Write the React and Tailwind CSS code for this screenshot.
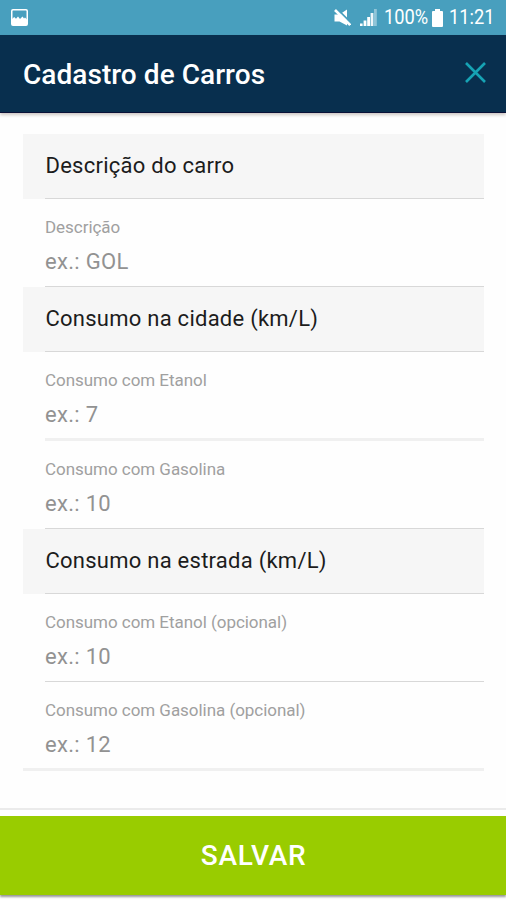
import React from 'react';

const sections = [
  {
    title: 'Descrição do carro',
    fields: [{ label: 'Descrição', hint: 'ex.: GOL', row: 'h-[88px]', line: 'h-[1.5px] bg-[#d8d8d8]' }],
  },
  {
    title: 'Consumo na cidade (km/L)',
    fields: [
      { label: 'Consumo com Etanol', hint: 'ex.: 7', row: 'h-[89px]', line: 'h-[3px] bg-[#f0f0f0]' },
      { label: 'Consumo com Gasolina', hint: 'ex.: 10', row: 'h-[88px]', line: 'h-[1.5px] bg-[#d8d8d8]' },
    ],
  },
  {
    title: 'Consumo na estrada (km/L)',
    fields: [
      { label: 'Consumo com Etanol (opcional)', hint: 'ex.: 10', row: 'h-[88px]', line: 'h-[1.5px] bg-[#d8d8d8]' },
      { label: 'Consumo com Gasolina (opcional)', hint: 'ex.: 12', row: 'h-[89px]', line: 'h-[3px] bg-[#f0f0f0]' },
    ],
  },
];

const StatusBar = () => (
  <div className="flex h-[35px] shrink-0 items-center bg-[#489fbe] pl-[11px] pr-[11px] text-white">
    <svg width="17" height="17" viewBox="0 0 17 17" fill="none">
      <rect x="0.75" y="0.75" width="15.5" height="15.5" rx="1.2" stroke="#fff" strokeWidth="1.5" />
      <path d="M1 16V10L3.2 8L5 9.8L7 7.5L9 10L11.5 7.5L13 9.5L14 8.5L16 10.5V16Z" fill="#fff" />
    </svg>
    <svg className="ml-auto" width="17" height="18" viewBox="0 0 17 18">
      <path d="M0.5 5.5H5.5L13 0.5V16.5L5.5 12.5H0.5Z" fill="#fff" />
      <path d="M3.2 0L17.5 14.4" stroke="#489fbe" strokeWidth="1.8" />
      <path d="M1 1L16.2 16" stroke="#fff" strokeWidth="2.6" />
    </svg>
    <svg className="ml-[9px]" width="17" height="17" viewBox="0 0 17 17" fill="#fff">
      <rect x="0" y="14.5" width="2.6" height="2.5" />
      <rect x="3.6" y="11.5" width="2.8" height="5.5" />
      <rect x="7.2" y="8" width="2.8" height="9" />
      <rect x="10.6" y="4" width="2.8" height="13" opacity="0.9" />
      <rect x="14" y="0" width="2.8" height="17" opacity="0.4" />
    </svg>
    <span className="ml-[7px] w-[46px] whitespace-nowrap text-[21px] leading-none">
      <span className="inline-block origin-left scale-x-[0.87]">100%</span>
    </span>
    <svg className="ml-[2px]" width="11" height="18" viewBox="0 0 11 18" fill="#fff">
      <path d="M3 0H8V2H10Q11 2 11 3V17Q11 18 10 18H1Q0 18 0 17V3Q0 2 1 2H3Z" />
    </svg>
    <span className="ml-[6px] w-[46px] whitespace-nowrap text-[21px] leading-none">
      <span className="inline-block origin-left scale-x-[0.87]">11:21</span>
    </span>
  </div>
);

const Field = ({ label, hint, row, line, full }) => (
  <div className={`flex flex-col ${row}`}>
    <div className="flex flex-1 flex-col pl-[22px] pt-[15.5px]">
      <span className="text-[17px] leading-6 tracking-[-0.04px] text-[#a0a0a0]">{label}</span>
      <span className="mt-[7.5px] text-[22px] leading-8 tracking-[0.3px] text-[#929292]">{hint}</span>
    </div>
    <div className={`shrink-0 ${full ? '' : 'ml-[22px]'} ${line}`} />
  </div>
);

const App = () => (
  <div className="flex h-[900px] w-[506px] flex-col overflow-hidden bg-[#fefefe] font-['Roboto',sans-serif]">
    <StatusBar />
    <header className="flex h-[78px] shrink-0 items-center justify-between border-b border-[#0a1138] bg-[#082f4e] pl-[23px] pr-[20px] shadow-[0_2px_3px_rgba(60,30,20,0.25)]">
      <h1 className="pt-[2px] text-[28px] font-medium leading-9 tracking-[0.05px] text-white">Cadastro de Carros</h1>
      <svg width="21" height="21" viewBox="0 0 21 21" stroke="#16a3b4" strokeWidth="2.6" className="mb-[3px]">
        <path d="M1 1L20 20M20 1L1 20" />
      </svg>
    </header>
    <main className="flex-1 pl-[23px] pr-[22px] pt-[21px]">
      {sections.map((s, i) => (
        <section key={s.title}>
          <div className="flex h-[65px] flex-col bg-[#f6f6f6]">
            <h2 className="flex flex-1 items-center pb-px pl-[22.5px] text-[22px] tracking-[0.25px] text-[#1c1c1c]">{s.title}</h2>
            <div className="ml-[22px] h-[1.5px] bg-[#d8d8d8]" />
          </div>
          {s.fields.map((f, j) => (
            <Field key={f.label} {...f} full={i === sections.length - 1 && j === s.fields.length - 1} />
          ))}
        </section>
      ))}
    </main>
    <footer className="h-[92px] shrink-0 border-t-2 border-[#ebebeb] pt-[6px]">
      <button className="flex h-[79px] w-full items-center justify-center bg-[#9c0] pt-px pl-px text-[28px] font-medium tracking-[0.7px] text-white shadow-[0_2px_2px_rgba(0,0,0,0.4)]">
        SALVAR
      </button>
    </footer>
  </div>
);

export default App;
